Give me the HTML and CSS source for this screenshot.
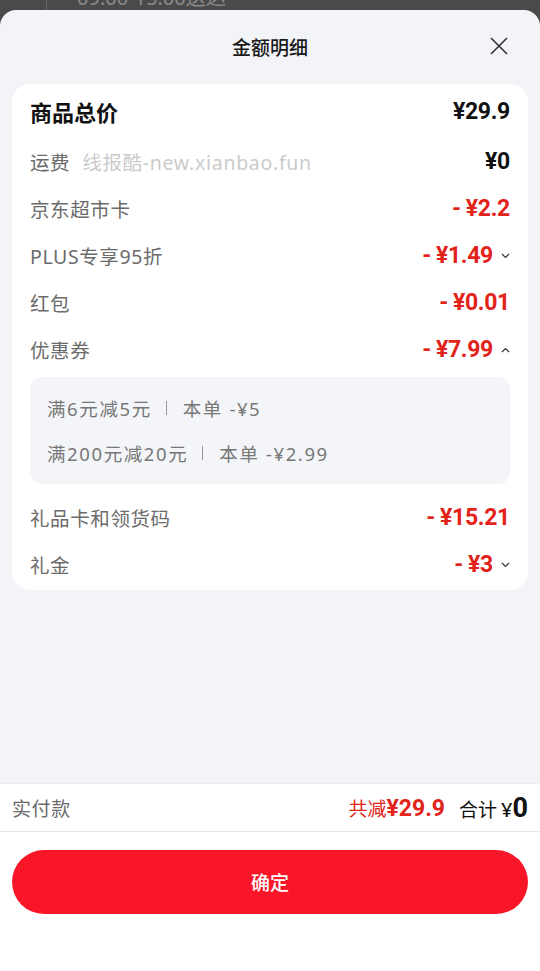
FILE: index.html
```html
<!DOCTYPE html>
<html lang="zh-CN">
<head>
    <meta charset="UTF-8">
    <meta name="viewport" content="width=device-width, initial-scale=1.0">
    <title>金额明细</title>
    <link rel="stylesheet" href="styles.css">
</head>
<body>

    <div class="backdrop">
        <span class="backdrop-line"></span>
        <span class="backdrop-text">09:00-15:00送达</span>
    </div>

    <div class="sheet">
        <div class="header">
            <h2>金额明细</h2>
            <span class="close">
                <svg width="18" height="18" viewBox="0 0 18 18"><path d="M1 1L17 17M17 1L1 17" stroke="#333" stroke-width="1.6" fill="none"/></svg>
            </span>
        </div>

        <div class="card">
            <div class="row row-total">
                <span class="label">商品总价</span>
                <span class="amount black">¥29.9</span>
            </div>
            <div class="row">
                <span class="label">运费<span class="watermark">线报酷-new.xianbao.fun</span></span>
                <span class="amount black">¥0</span>
            </div>
            <div class="row">
                <span class="label">京东超市卡</span>
                <span class="amount"><i>-</i>¥2.2</span>
            </div>
            <div class="row">
                <span class="label">PLUS专享95折</span>
                <span class="amount"><i>-</i>¥1.49<svg class="chev" width="9" height="6" viewBox="0 0 9 6"><path d="M1 1L4.5 4.5L8 1" stroke="#333" stroke-width="1.2" fill="none"/></svg></span>
            </div>
            <div class="row">
                <span class="label">红包</span>
                <span class="amount"><i>-</i>¥0.01</span>
            </div>
            <div class="row">
                <span class="label">优惠券</span>
                <span class="amount"><i>-</i>¥7.99<svg class="chev" width="9" height="6" viewBox="0 0 9 6"><path d="M1 5L4.5 1.5L8 5" stroke="#333" stroke-width="1.2" fill="none"/></svg></span>
            </div>
            <div class="coupons">
                <p>满6元减5元<span class="sep"></span>本单 -¥5</p>
                <p>满200元减20元<span class="sep"></span>本单 -¥2.99</p>
            </div>
            <div class="row row-after">
                <span class="label">礼品卡和领货码</span>
                <span class="amount"><i>-</i>¥15.21</span>
            </div>
            <div class="row">
                <span class="label">礼金</span>
                <span class="amount"><i>-</i>¥3<svg class="chev" width="9" height="6" viewBox="0 0 9 6"><path d="M1 1L4.5 4.5L8 1" stroke="#333" stroke-width="1.2" fill="none"/></svg></span>
            </div>
        </div>

        <div class="spacer"></div>

        <div class="footer">
            <div class="pay">
                <span class="pay-label">实付款</span>
                <span class="pay-sum">
                    <span class="minus">共减<b>¥29.9</b></span>
                    <span class="total">合计<small>¥</small><b>0</b></span>
                </span>
            </div>
            <div class="actions">
                <button type="button">确定</button>
            </div>
        </div>
    </div>

</body>
</html>
```

FILE: styles.css
```css
body {
    margin: 0;
    width: 540px;
    height: 971px;
    background-color: #4a4a4a;
    font-family: "Noto Sans", "Noto Sans CJK SC", sans-serif;
    overflow: hidden;
}
.backdrop {
    height: 10px;
    overflow: hidden;
    display: flex;
    color: #8a8a8a;
    font-size: 20px;
}
.backdrop-line {
    width: 1px;
    height: 10px;
    background-color: #666;
    margin-left: 46px;
}
.backdrop-text {
    margin-left: 30px;
    margin-top: -15px;
    line-height: 26px;
}
.sheet {
    height: 961px;
    background-color: #f3f4f8;
    border-radius: 16px 16px 0 0;
    display: flex;
    flex-direction: column;
}
.header {
    height: 74px;
    position: relative;
    display: flex;
    align-items: center;
    justify-content: center;
}
.header h2 {
    margin: 0;
    font-size: 19px;
    font-weight: 500;
    color: #1a1a1a;
}
.close {
    position: absolute;
    right: 32px;
    top: 27px;
    line-height: 0;
}
.card {
    margin: 0 12px;
    background-color: white;
    border-radius: 18px;
    padding: 0 18px 2px;
}
.row {
    height: 47px;
    display: flex;
    align-items: center;
    justify-content: space-between;
}
.row-total {
    height: 54px;
}
.row-after {
    margin-top: 10px;
}
.label {
    font-size: 19.5px;
    color: #6b6b6b;
    letter-spacing: 0.6px;
}
.row-total .label {
    font-size: 22px;
    font-weight: 700;
    color: #111;
    letter-spacing: 0;
}
.watermark {
    color: #cbcbcb;
    margin-left: 12px;
    letter-spacing: 0.7px;
}
.amount {
    display: flex;
    align-items: center;
    font-family: Roboto, "Noto Sans", sans-serif;
    font-size: 23px;
    font-weight: 700;
    color: #e2231a;
    letter-spacing: -0.3px;
}
.amount i {
    font-style: normal;
    margin-right: 5px;
}
.amount.black {
    color: #111;
}
.chev {
    margin-left: 8px;
}
.coupons {
    margin-top: 4px;
    background-color: #f4f5f8;
    border-radius: 12px;
    padding: 8px 17px 9px;
}
.coupons p {
    margin: 0;
    height: 45px;
    display: flex;
    align-items: center;
    font-size: 18.5px;
    color: #777;
    letter-spacing: 1.6px;
}
.sep {
    width: 1px;
    height: 14px;
    background-color: #999;
    margin: 0 16px 0 14px;
}
.spacer {
    flex: 1;
}
.footer {
    background-color: white;
    height: 187px;
    border-top: 1px solid #ebebeb;
}
.pay {
    height: 47px;
    padding: 0 12px;
    border-bottom: 1px solid #e6e6e6;
    display: flex;
    align-items: center;
    justify-content: space-between;
}
.pay-label {
    font-size: 19px;
    color: #6b6b6b;
    letter-spacing: 0.6px;
}
.pay-sum {
    display: flex;
    align-items: center;
    gap: 14px;
}
.minus {
    font-size: 19px;
    color: #e2231a;
}
.minus b {
    font-family: Roboto, "Noto Sans", sans-serif;
    font-size: 23px;
    font-weight: 700;
}
.total {
    font-size: 19px;
    color: #111;
}
.total small {
    font-size: 20px;
    margin-left: 4px;
    font-weight: 500;
}
.total b {
    font-family: Roboto, "Noto Sans", sans-serif;
    font-size: 27px;
    font-weight: 700;
}
.actions {
    padding: 18px 12px 0;
}
button {
    width: 100%;
    height: 64px;
    border: none;
    border-radius: 32px;
    background-color: #fa1629;
    color: white;
    font-family: "Noto Sans", "Noto Sans CJK SC", sans-serif;
    font-size: 19px;
    font-weight: 500;
}
```
